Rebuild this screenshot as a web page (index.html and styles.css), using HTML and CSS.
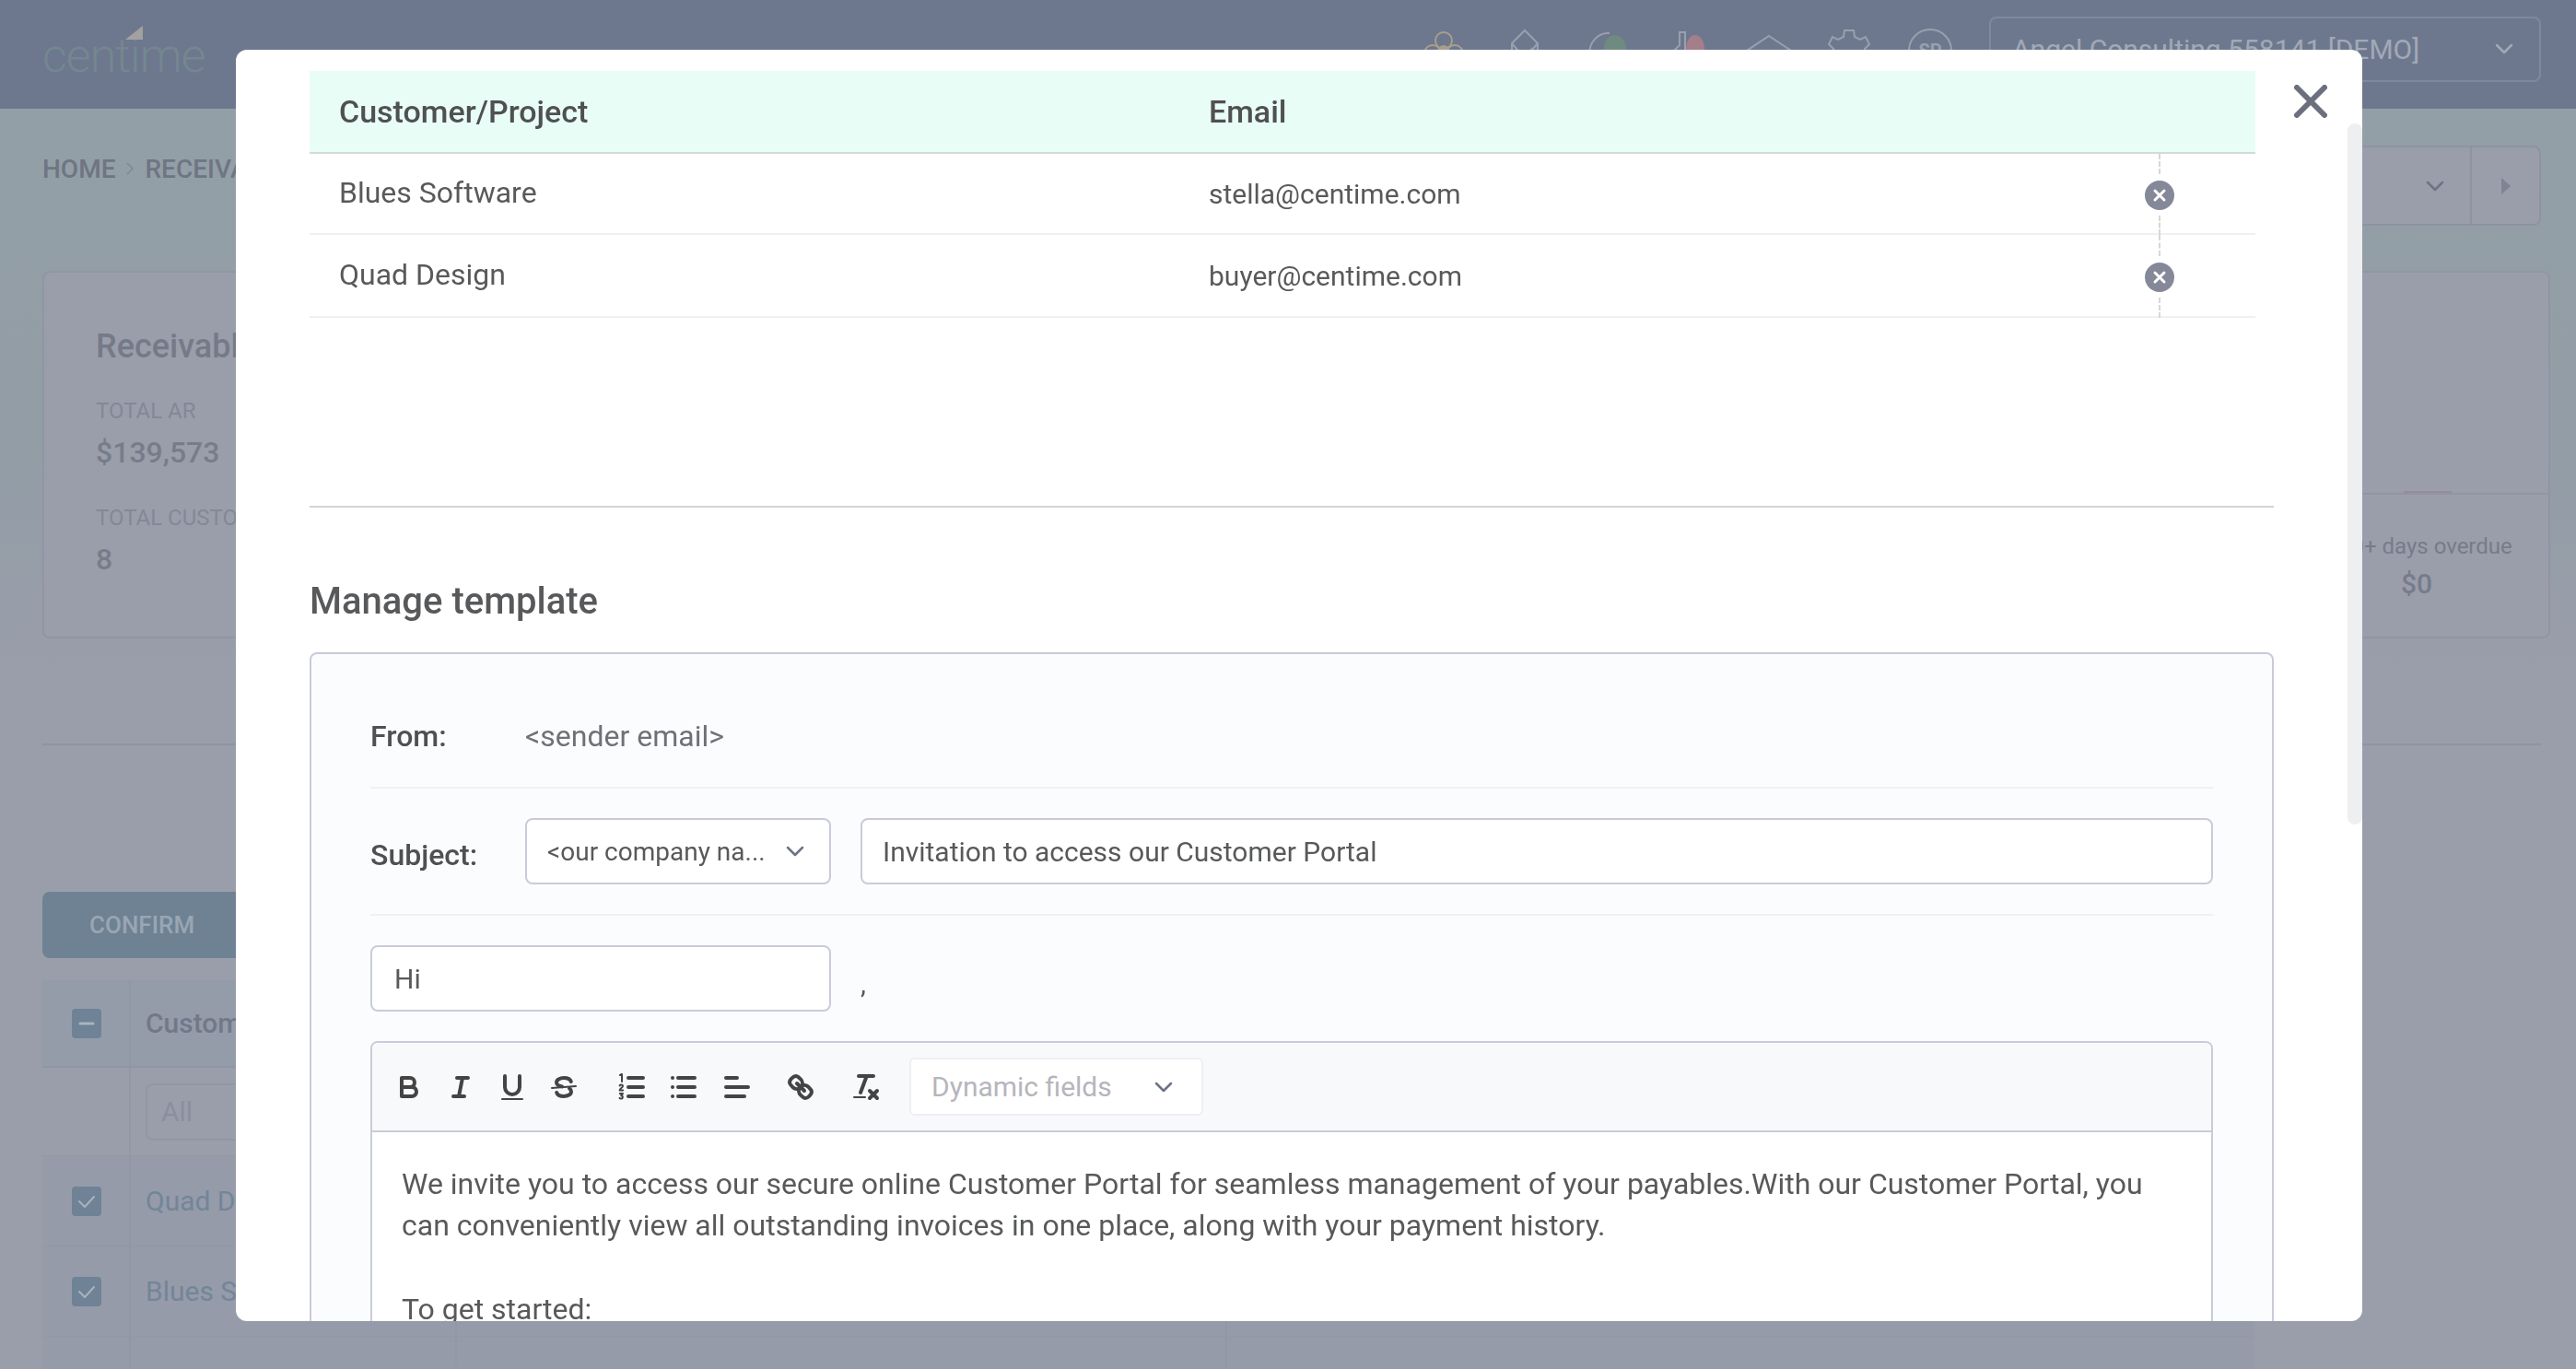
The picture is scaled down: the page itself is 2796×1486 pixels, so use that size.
FILE: index.html
```html
<!DOCTYPE html>
<html lang="en">
<head>
<meta charset="utf-8">
<title>Centime - Manage template</title>
<link rel="stylesheet" href="styles.css">
</head>
<body>
<header class="topbar">
  <div class="logo"><svg class="logo-mark" viewBox="0 0 19 15"><polygon points="0,15 19,15 19,0"/></svg>centime</div>
  <div class="top-icons">
    <svg viewBox="0 0 48 48" class="ti ti-y"><circle cx="24" cy="13" r="9"/><circle cx="12" cy="27" r="9"/><circle cx="36" cy="27" r="9"/><ellipse class="fy" cx="24" cy="28" rx="8" ry="10"/></svg>
    <svg viewBox="0 0 48 48" class="ti"><path d="M10 16 24 2l14 14v28H10zM10 16l10 12M38 16 28 28"/><polygon class="fg" points="32,20 32,36 20,36"/></svg>
    <svg viewBox="0 0 48 48" class="ti"><path d="M4 28C4 14 14 4 26 5"/><ellipse class="fgreen" cx="32" cy="22" rx="12" ry="15"/></svg>
    <svg viewBox="0 0 48 48" class="ti"><path d="M4 46V24l6-6V4h6v20"/><ellipse class="fred" cx="27" cy="22" rx="10" ry="15"/></svg>
    <svg viewBox="0 0 48 48" class="ti"><path d="M24 8 48 24 24 40 0 24zM8 30v14h32V30"/></svg>
    <svg viewBox="0 0 48 48" class="ti"><path d="M19 2h10l1 7 6 3 6-3 4 8-5 5v6l5 5-6 8-6-3-5 3-1 7H19l-1-7-6-3-6 3-4-8 5-5v-6l-5-5 4-8 6 3 6-3z"/></svg>
    <div class="avatar">SP</div>
  </div>
  <div class="account"><span class="account-name">Angel Consulting 558141 [DEMO]</span><svg class="chev chev-top" viewBox="0 0 20 12"><path d="M2 2l8 8 8-8"/></svg></div>
</header>

<main class="page">
  <div class="crumb-row">
    <nav class="crumbs"><span>HOME</span><svg class="crumb-sep" viewBox="0 0 8 16"><path d="M1 2l6 6-6 6"/></svg><span>RECEIVABLES</span></nav>
    <div class="pager">
      <div class="pager-sel"><svg class="chev chev-dim" viewBox="0 0 20 12"><path d="M2 2l8 8 8-8"/></svg></div>
      <div class="pager-next"><svg class="caret" viewBox="0 0 10 18"><polygon points="0,0 10,9 0,18"/></svg></div>
    </div>
  </div>

  <section class="card">
    <div class="stats">
      <h2 class="card-title">Receivables</h2>
      <div class="stat-label">TOTAL AR</div>
      <div class="stat-value">$139,573</div>
      <div class="stat-label stat-gap">TOTAL CUSTOMERS</div>
      <div class="stat-value">8</div>
    </div>
    <div class="aging">
      <div class="aging-bar"><span class="aging-tick"></span></div>
      <div class="aging-label">90+ days overdue</div>
      <div class="aging-value">$0</div>
    </div>
  </section>

  <hr class="page-rule">

  <button class="confirm">CONFIRM</button>

  <div class="bg-table">
    <div class="bg-row bg-head">
      <div class="bg-check"><span class="box box-head"><svg viewBox="0 0 32 32"><path d="M9 16h14"/></svg></span></div>
      <div class="bg-cell bg-strong">Customer/Project</div><div class="bg-cell2"></div>
    </div>
    <div class="bg-row bg-filter">
      <div class="bg-check"></div>
      <div class="bg-cell"><span class="bg-input">All</span></div><div class="bg-cell2"></div>
    </div>
    <div class="bg-row bg-item">
      <div class="bg-check"><span class="box"><svg viewBox="0 0 32 32"><path d="M8 16l6 6 10-11"/></svg></span></div>
      <div class="bg-cell bg-link">Quad Design</div><div class="bg-cell2"></div>
    </div>
    <div class="bg-row bg-item">
      <div class="bg-check"><span class="box"><svg viewBox="0 0 32 32"><path d="M8 16l6 6 10-11"/></svg></span></div>
      <div class="bg-cell bg-link">Blues Software</div><div class="bg-cell2"></div>
    </div>
    <div class="bg-row bg-item">
      <div class="bg-check"></div>
      <div class="bg-cell"></div><div class="bg-cell2"></div>
    </div>
  </div>
</main>

<div class="modal">
  <div class="scroll-thumb"></div>
  <button class="close" aria-label="Close"><svg viewBox="0 0 36 36"><path d="M3 3l30 30M33 3 3 33"/></svg></button>
  <div class="modal-body">
    <div class="inv-table">
      <div class="inv-row inv-head"><div class="c1">Customer/Project</div><div class="c2">Email</div><div class="c3"></div></div>
      <div class="inv-row inv-a">
        <div class="c1">Blues Software</div><div class="c2">stella@centime.com</div>
        <div class="c3"><span class="dash"></span><span class="rm"><svg viewBox="0 0 32 32"><path d="M11 11l10 10M21 11 11 21"/></svg></span><span class="dash"></span></div>
      </div>
      <div class="inv-row inv-b">
        <div class="c1">Quad Design</div><div class="c2">buyer@centime.com</div>
        <div class="c3"><span class="dash"></span><span class="rm"><svg viewBox="0 0 32 32"><path d="M11 11l10 10M21 11 11 21"/></svg></span><span class="dash"></span></div>
      </div>
    </div>
    <hr class="sep">
    <h3 class="section-title">Manage template</h3>
    <div class="tpl">
      <div class="tpl-row tpl-from"><label class="tpl-label">From:</label><span class="tpl-sender">&lt;sender email&gt;</span></div>
      <div class="tpl-row tpl-subject">
        <label class="tpl-label">Subject:</label>
        <div class="field field-select"><span class="field-text">&lt;our company na...</span><svg class="chev" viewBox="0 0 20 12"><path d="M2 2l8 8 8-8"/></svg></div>
        <div class="field field-grow">Invitation to access our Customer Portal</div>
      </div>
      <div class="tpl-greet">
        <div class="field field-hi">Hi</div><span class="comma">,</span>
      </div>
      <div class="editor">
        <div class="toolbar">
          <div class="tool-group">
            <button class="tool"><svg viewBox="0 0 18 18"><path d="M5,4H9.5A2.5,2.5,0,0,1,12,6.5v0A2.5,2.5,0,0,1,9.5,9H5V4Z"/><path d="M5,9h5.5A2.5,2.5,0,0,1,13,11.5v0A2.5,2.5,0,0,1,10.5,14H5V9Z"/></svg></button>
            <button class="tool"><svg viewBox="0 0 18 18"><path d="M7 4h6M5 14h6M8 14l2-10"/></svg></button>
            <button class="tool"><svg viewBox="0 0 18 18"><path d="M5,3V9a4,4,0,0,0,4,4H9a4,4,0,0,0,4-4V3"/><rect class="tf" x="3" y="15" width="12" height="1" rx="0.5"/></svg></button>
            <button class="tool"><svg viewBox="0 0 18 18"><path class="thin" d="M15.5 8.5l-13 1"/><path d="M12.9 6C12.5 4.8 10.9 4 9 4 6.8 4 5 5.1 5 6.5 5 7.6 6 8.3 8 8.7M5.1 12c.4 1.2 2 2 3.9 2 2.2 0 4-1.1 4-2.5 0-.7-.3-1.300-1-1.800"/></svg></button>
          </div>
          <div class="tool-group">
            <button class="tool"><svg viewBox="0 0 18 18"><path d="M7 4h8M7 9h8M7 14h8"/><path class="thin" d="M2.500 2.500 3.500 2v4M2.300 8.200c.5-.7 1.700-.5 1.700.3 0 .8-1.700 1.300-1.700 2.200h1.800M2.400 12.500h1.600l-.9 1.100c1 0 1.200 1.700-.1 1.700-.4 0-.6-.1-.7-.3"/></svg></button>
            <button class="tool"><svg viewBox="0 0 18 18"><path d="M6 4h9M6 9h9M6 14h9M3 4h.01M3 9h.01M3 14h.01"/></svg></button>
            <button class="tool tool-align"><svg viewBox="0 0 18 18"><path d="M3 9h12M3 14h10M3 4h6"/></svg></button>
          </div>
          <div class="tool-group">
            <button class="tool"><svg viewBox="0 0 18 18"><path d="M7 7l4 4"/><path d="M8.900,4.577a3.476,3.476,0,0,1,.36,4.679A3.476,3.476,0,0,1,4.577,8.900C3.185,7.500,2.035,6.400,4.217,4.217S7.500,3.185,8.900,4.577Z"/><path d="M13.423,9.100a3.476,3.476,0,0,0-4.679-.36,3.476,3.476,0,0,0,.36,4.679c1.392,1.392,2.500,2.542,4.679.36S14.815,10.500,13.423,9.100Z"/></svg></button>
          </div>
          <div class="tool-group">
            <button class="tool"><svg viewBox="0 0 18 18"><path d="M5 3h8M6 12 9.350 3M11 11l4 4M15 11l-4 4"/><rect class="tf" x="2" y="14" width="7" height="1" rx="0.5"/></svg></button>
          </div>
          <div class="dyn"><span>Dynamic fields</span><svg class="chev" viewBox="0 0 20 12"><path d="M2 2l8 8 8-8"/></svg></div>
        </div>
        <div class="editor-body">
          <p>We invite you to access our secure online Customer Portal for seamless management of your payables.With our Customer Portal, you can conveniently view all outstanding invoices in one place, along with your payment history.</p>
          <p class="blank">&nbsp;</p>
          <p>To get started:</p>
        </div>
      </div>
    </div>
  </div>
</div>
</body>
</html>
```
FILE: styles.css
```css
* { box-sizing: border-box; }
html, body { height: 100%; }
body {
  margin: 0;
  overflow: hidden;
  font-family: Roboto, "Liberation Sans", sans-serif;
  background: linear-gradient(180deg, #939fa6 118px, #929da6 480px, #9a9eaa 760px);
  color: #58595b;
}
svg { display: block; }

/* dimmed page behind the dialog */
.topbar {
  height: 118px;
  background: #6d788f;
  display: flex;
  align-items: center;
  padding: 0 38px 0 46px;
}
.logo {
  position: relative;
  font-size: 52px;
  font-weight: 300;
  letter-spacing: -1px;
  color: #74878f;
  line-height: 1;
  margin-top: 4px;
}
.logo-mark {
  position: absolute;
  left: 90px;
  top: -7px;
  width: 19px;
  height: 15px;
  fill: #a3a19f;
}
.top-icons {
  margin-left: auto;
  display: flex;
  gap: 41px;
  margin-right: 40px;
  margin-top: -8px;
}
.top-icons > :nth-child(2) { margin-left: -1px; }
.top-icons > :nth-child(3) { margin-left: 1px; }
.top-icons > :nth-child(4) { margin-left: 3px; }
.top-icons > :nth-child(5) { margin-left: -6px; }
.top-icons > :nth-child(6) { margin-left: -2px; }
.top-icons > :nth-child(7) { margin-left: -1px; }
.ti { width: 48px; height: 48px; fill: none; stroke: #98a0ae; stroke-width: 2; }
.ti-y { stroke: #a89f8a; }
.fy { fill: #a89f8a; stroke: none; }
.fg { fill: #a3a19f; stroke: none; }
.fgreen { fill: #6f8a80; stroke: none; }
.fred { fill: #a47e8b; stroke: none; }
.avatar {
  width: 48px;
  height: 48px;
  border: 2px solid #98a0ae;
  border-radius: 50%;
  display: flex;
  align-items: center;
  justify-content: center;
  font-size: 20px;
  font-weight: 700;
  color: #98a0ae;
}
.account {
  width: 599px;
  height: 71px;
  margin-bottom: 12px;
  border: 2px solid #7f899d;
  border-radius: 8px;
  display: flex;
  align-items: center;
  justify-content: space-between;
  padding: 0 28px 0 23px;
  font-size: 30px;
  color: #a2a9b6;
}
.page { padding: 0 38px 0 46px; }
.crumb-row { display: flex; justify-content: space-between; margin-top: 40px; height: 87px; }
.crumbs {
  display: flex;
  align-items: center;
  gap: 12px;
  height: 50px;
  font-size: 28px;
  font-weight: 500;
  color: #6e7583;
}
.crumb-sep { width: 8px; height: 16px; fill: none; stroke: #7f8793; stroke-width: 1.500; }
.pager {
  width: 300px;
  height: 87px;
  border: 2px solid #8e93a3;
  border-radius: 8px;
  background: #9a9eab;
  display: flex;
}
.pager-sel {
  flex: 1;
  display: flex;
  align-items: center;
  justify-content: flex-end;
  padding-right: 28px;
  border-right: 2px solid #8e93a3;
}
.pager-next { width: 73px; display: flex; align-items: center; justify-content: center; }
.caret { width: 10px; height: 18px; fill: #7f8393; }
.chev-dim path { stroke: #7f8393; }

.card {
  margin-top: 49px;
  width: 2722px;
  height: 399px;
  background: #9a9eab;
  border: 2px solid #9195a4;
  border-radius: 8px;
  display: flex;
  justify-content: space-between;
  padding-left: 56px;
}
.card-title { margin: 56px 0 0; font-size: 36px; font-weight: 500; line-height: 48px; color: #757a89; }
.stat-label { margin-top: 31px; font-size: 24px; line-height: 30px; color: #838897; }
.stat-gap { margin-top: 36px; }
.stat-value { margin-top: 10px; font-size: 32px; font-weight: 500; line-height: 40px; color: #787c8a; }
.aging { width: 250px; padding-top: 237px; }
.aging-bar { height: 4px; border-bottom: 2px solid #9195a4; position: relative; }
.aging-tick { position: absolute; left: 93px; top: 0; width: 52px; height: 2px; background: #9b8a9a; }
.aging-label { margin-top: 40px; font-size: 24px; line-height: 32px; color: #777b8a; white-space: nowrap; padding-left: 23px; }
.aging-value { margin-top: 7px; font-size: 30px; font-weight: 500; color: #777b8a; padding-left: 90px; }
.page-rule { margin: 114px 0 0; border: 0; height: 2px; background: #8f93a2; }

.confirm {
  display: block;
  margin-top: 159px;
  width: 300px;
  height: 72px;
  border: 0;
  border-radius: 8px;
  background: #6e8294;
  color: #99a6b3;
  font: 500 26px Roboto, sans-serif;
  text-align: left;
  padding-left: 51px;
}
.bg-table { margin-top: 24px; width: 2400px; }
.bg-row { display: flex; }
.bg-head { height: 95px; background: #949ca9; border-bottom: 2px solid #8f95a3; }
.bg-filter { height: 95px; }
.bg-item { height: 98px; background: #959ba8; border-top: 1px solid #92999f; }
.bg-check { width: 96px; display: flex; align-items: center; justify-content: center; padding-left: 2px; border-right: 2px solid #9297a4; }
.bg-cell { width: 354px; display: flex; align-items: center; padding-left: 16px; font-size: 30px; border-right: 2px dashed #9297a4; }
.bg-cell2 { width: 836px; border-right: 2px solid #9297a4; }
.bg-strong { font-weight: 500; color: #737889; }
.bg-link { color: #738599; }
.bg-input {
  width: 300px;
  height: 62px;
  border: 2px solid #9297a4;
  border-radius: 8px;
  padding-left: 15px;
  line-height: 58px;
  color: #8a8e9f;
}
.box { width: 32px; height: 32px; border-radius: 4px; background: #6f8296; display: block; }
.box svg { width: 32px; height: 32px; fill: none; stroke: #a9b3bf; stroke-width: 2; stroke-linecap: round; stroke-linejoin: round; }
.box-head svg { stroke-width: 3; }

/* dialog */
.modal {
  position: fixed;
  left: 256px;
  top: 54px;
  width: 2308px;
  height: 1380px;
  background: #fff;
  border-radius: 12px;
  overflow: hidden;
}
.scroll-thumb {
  position: absolute;
  right: 0;
  top: 80px;
  width: 16px;
  height: 761px;
  border-radius: 8px;
  background: #eeeff1;
}
.close {
  position: absolute;
  left: 2234px;
  top: 38px;
  width: 36px;
  height: 36px;
  padding: 0;
  border: 0;
  background: none;
}
.close svg { width: 36px; height: 36px; fill: none; stroke: #6b6f7e; stroke-width: 6; stroke-linecap: round; }
.modal-body { padding: 23px 0 0 80px; width: 2212px; }

.inv-table { width: 2112px; font-size: 32px; }
.inv-row { display: flex; border-bottom: 2px solid #f0f0f2; }
.inv-head {
  height: 90px;
  background: #e9fdf7;
  border-bottom-color: #d1dbd8;
  align-items: center;
  font-weight: 500;
  color: #4f5052;
  font-size: 34px;
}
.inv-a { height: 88px; }
.inv-b { height: 90px; }
.c1 { width: 976px; padding-left: 32px; display: flex; align-items: center; }
.c2 { width: 1000px; display: flex; align-items: center; }
.c3 { flex: 1; display: flex; flex-direction: column; align-items: center; padding-right: 72px; }
.inv-a .c1, .inv-b .c1 { padding-bottom: 2px; }
.inv-a .c2, .inv-b .c2 { color: #58595b; font-size: 30px; }
.dash { flex: 1; border-left: 2px dashed #d7d7da; margin-bottom: -2px; }
.rm {
  width: 32px;
  height: 32px;
  margin: 9px 0 6px;
  border-radius: 50%;
  background: #848898;
}
.rm svg { width: 32px; height: 32px; fill: none; stroke: #fff; stroke-width: 3; stroke-linecap: round; }

.sep { margin: 204px 0 0; border: 0; height: 2px; background: #d3d3da; width: 2132px; }
.section-title { margin: 78px 0 0; font-size: 40px; line-height: 48px; font-weight: 500; color: #58595b; }
.tpl {
  margin-top: 31px;
  width: 2132px;
  border: 2px solid #c9cbd9;
  border-radius: 8px;
  background: #fbfcfe;
  padding: 0 64px;
}
.tpl-row { display: flex; align-items: center; border-bottom: 2px solid #f0f1f3; }
.tpl-from { height: 146px; padding-top: 34px; }
.tpl-subject { height: 138px; gap: 32px; }
.tpl-label { width: 168px; font-size: 32px; font-weight: 500; color: #4f5052; flex-shrink: 0; }
.tpl-subject .tpl-label { margin-right: -32px; padding-top: 8px; }
.tpl-sender { font-size: 32px; color: #6f7176; }
.field {
  height: 72px;
  border: 2px solid #c9cbd9;
  border-radius: 8px;
  background: #fff;
  display: flex;
  align-items: center;
  font-size: 30px;
  color: #58595b;
}
.field-select { width: 332px; padding: 0 27px 0 22px; justify-content: space-between; font-size: 28px; }
.field-text { white-space: nowrap; }
.field-grow { flex: 1; padding-left: 22px; }
.field-hi { width: 500px; padding-left: 24px; }
.tpl-greet { display: flex; align-items: flex-start; gap: 32px; padding-top: 32px; }
.comma { font-size: 30px; padding-top: 24px; color: #58595b; }
.chev { width: 20px; height: 12px; fill: none; flex-shrink: 0; }
.chev path { stroke: #6d7387; stroke-width: 2.500; stroke-linecap: round; stroke-linejoin: round; }
.chev-top path { stroke: #a2a9b6; }

.editor {
  margin-top: 32px;
  border: 2px solid #c9cbd9;
  border-radius: 8px;
  background: #fff;
}
.toolbar {
  height: 97px;
  border-bottom: 2px solid #c9cbd9;
  background: #f8f9fb;
  border-radius: 6px 6px 0 0;
  display: flex;
  align-items: center;
  padding-left: 12px;
  gap: 18px;
}
.tool-group { display: flex; }
.tool-group + .tool-group + .tool-group { margin-left: -3px; }
.tool {
  width: 56px;
  height: 48px;
  padding: 0;
  border: 0;
  background: none;
  display: flex;
  align-items: center;
  justify-content: center;
}
.tool-align { padding-left: 3px; }
.tool svg { width: 36px; height: 36px; fill: none; stroke: #444; stroke-width: 2; stroke-linecap: round; stroke-linejoin: round; }
.tool .thin { stroke-width: 1; }
.tool .tf { fill: #444; stroke: none; }
.dyn {
  width: 319px;
  height: 63px;
  margin-left: 1px;
  border: 2px solid #eeeff3;
  border-radius: 6px;
  background: #fff;
  display: flex;
  align-items: center;
  justify-content: space-between;
  padding: 0 31px 0 22px;
  font-size: 30px;
  color: #b5b6bb;
}
.editor-body { padding: 34px 34px 0 32px; min-height: 400px; font-size: 32px; line-height: 45.400px; color: #58595b; }
.editor-body p { margin: 0; }
```
